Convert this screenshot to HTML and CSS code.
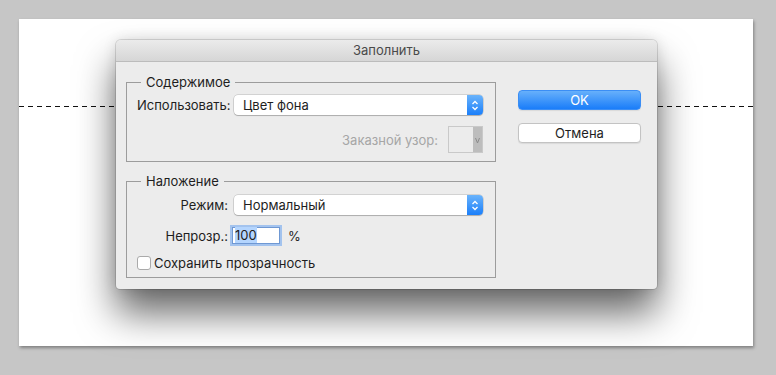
FILE: index.html
```html
<!DOCTYPE html>
<html lang="ru">
<head>
  <meta charset="UTF-8">
  <title>Заполнить</title>
  <link rel="stylesheet" href="styles.css">
</head>
<body>
  <div class="canvas">
    <div class="guide"></div>

    <div class="dialog">
      <div class="titlebar">Заполнить</div>
      <div class="dialog-body">
        <div class="groups">
          <fieldset class="group">
            <legend>Содержимое</legend>
            <div class="row">
              <label class="field-label">Использовать:</label>
              <div class="select">
                <span class="select-value">Цвет фона</span>
                <span class="select-arrows">
                  <svg width="16" height="20" viewBox="0 0 16 20">
                    <polyline points="5.5,9 8,6.5 10.5,9" fill="none" stroke="#fff" stroke-width="1.3"/>
                    <polyline points="5.5,12 8,14.5 10.5,12" fill="none" stroke="#fff" stroke-width="1.3"/>
                  </svg>
                </span>
              </div>
            </div>
            <div class="row row-end">
              <span class="disabled-label">Заказной узор:</span>
              <div class="swatch">
                <span class="swatch-fill"></span>
                <span class="swatch-arrow">
                  <svg width="9" height="25" viewBox="0 0 9 25">
                    <polyline points="2.5,11 4.5,16 6.5,11" fill="none" stroke="#8c8c8c" stroke-width="1"/>
                  </svg>
                </span>
              </div>
            </div>
          </fieldset>

          <fieldset class="group group-blend">
            <legend>Наложение</legend>
            <div class="row">
              <label class="field-label">Режим:</label>
              <div class="select">
                <span class="select-value">Нормальный</span>
                <span class="select-arrows">
                  <svg width="16" height="20" viewBox="0 0 16 20">
                    <polyline points="5.5,9 8,6.5 10.5,9" fill="none" stroke="#fff" stroke-width="1.3"/>
                    <polyline points="5.5,12 8,14.5 10.5,12" fill="none" stroke="#fff" stroke-width="1.3"/>
                  </svg>
                </span>
              </div>
            </div>
            <div class="row row-opacity">
              <label class="field-label">Непрозр.:</label>
              <div class="number-input"><span class="selected">100</span></div>
              <span class="unit">%</span>
            </div>
            <div class="row row-check">
              <span class="checkbox"></span>
              <span>Сохранить прозрачность</span>
            </div>
          </fieldset>
        </div>

        <div class="buttons">
          <button class="btn btn-primary">OK</button>
          <button class="btn">Отмена</button>
        </div>
      </div>
    </div>
  </div>
</body>
</html>
```

FILE: styles.css
```css
body {
  background-color: #c6c6c6;
  margin: 0;
  padding: 0;
  font-family: Inter, "Liberation Sans", Arial, sans-serif;
  font-size: 13px;
  color: #1e1e1e;
}
.canvas {
  position: relative;
  margin: 19px;
  width: 734px;
  height: 327px;
  background-color: #fff;
  box-shadow: 1px 2px 3px rgba(0, 0, 0, 0.35);
}
.guide {
  position: relative;
  top: 87px;
  height: 1px;
  background: repeating-linear-gradient(90deg, #111 0 5px, transparent 5px 9px);
}
.dialog {
  position: absolute;
  left: 97px;
  top: 21px;
  width: 541px;
  height: 249px;
  background-color: #ececec;
  border-radius: 5px 5px 4px 4px;
  box-shadow: 0 24px 38px rgba(0, 0, 0, 0.6), 0 0 14px rgba(0, 0, 0, 0.12), 0 0 0 1px rgba(0, 0, 0, 0.12);
  overflow: hidden;
}
.titlebar {
  height: 21px;
  line-height: 21px;
  text-align: center;
  color: #4a4a4a;
  background: linear-gradient(#ebebeb, #d6d6d6);
  border-bottom: 1px solid #bcbcbc;
}
.dialog-body {
  display: flex;
  padding: 12px 0 0 10px;
}
.groups {
  width: 370px;
}
.group {
  margin: 0;
  padding: 5px 12px 6px 10px;
  border: 1px solid #9c9c9c;
  min-width: 0;
}
.group:first-child {
  padding-bottom: 8px;
}
.group legend {
  margin-left: 4px;
  padding: 0 5px;
  line-height: 16px;
}
.group-blend {
  margin-top: 11px;
  padding-top: 6px;
}
.row {
  display: flex;
  align-items: center;
}
.row-end {
  justify-content: flex-end;
  margin-top: 11px;
}
.field-label {
  width: 91px;
  margin-right: 6px;
  text-align: right;
}
.select {
  flex: 1;
  display: flex;
  height: 20px;
  background-color: #fff;
  border-radius: 4px;
  box-shadow: 0 0 0 0.5px rgba(0, 0, 0, 0.22), 0 1px 1px rgba(0, 0, 0, 0.18);
}
.select-value {
  flex: 1;
  padding-left: 9px;
  line-height: 20px;
}
.select-arrows {
  width: 16px;
  height: 20px;
  border-radius: 0 4px 4px 0;
  background: linear-gradient(#6ab3fb, #1b7ffa);
}
.select-arrows svg {
  display: block;
}
.disabled-label {
  color: #a6a6a6;
  margin-right: 10px;
}
.swatch {
  display: flex;
  width: 33px;
  height: 25px;
  border: 1px solid #c9c9c9;
  background-color: #ececec;
}
.swatch-fill {
  flex: 1;
}
.swatch-arrow {
  width: 9px;
  background-color: #bdbdbd;
}
.swatch-arrow svg {
  display: block;
}
.row-opacity {
  margin-top: 12px;
}
.number-input {
  width: 44px;
  height: 15px;
  line-height: 15px;
  padding-left: 2px;
  margin-left: -2px;
  background-color: #fff;
  border: 1px solid #6f98d3;
  box-shadow: 0 0 0 2px #a3c3ee;
}
.selected {
  background-color: #b4d5fe;
}
.unit {
  margin-left: 8px;
}
.row-check {
  margin-top: 11px;
}
.checkbox {
  width: 12px;
  height: 12px;
  margin-right: 3px;
  background-color: #fff;
  border: 1px solid #aaa;
  border-radius: 3px;
}
.buttons {
  display: flex;
  flex-direction: column;
  gap: 13px;
  margin-left: 22px;
  padding-top: 16px;
  width: 123px;
}
.btn {
  height: 20px;
  padding: 0;
  font-family: inherit;
  font-size: 13px;
  color: #1e1e1e;
  background-color: #fff;
  border: 1px solid #c3c3c3;
  border-radius: 4px;
  box-shadow: 0 1px 1px rgba(0, 0, 0, 0.08);
}
.btn-primary {
  color: #fff;
  border: 1px solid #3b8ef5;
  background: linear-gradient(#67b0fb, #1a7df9);
}
```
